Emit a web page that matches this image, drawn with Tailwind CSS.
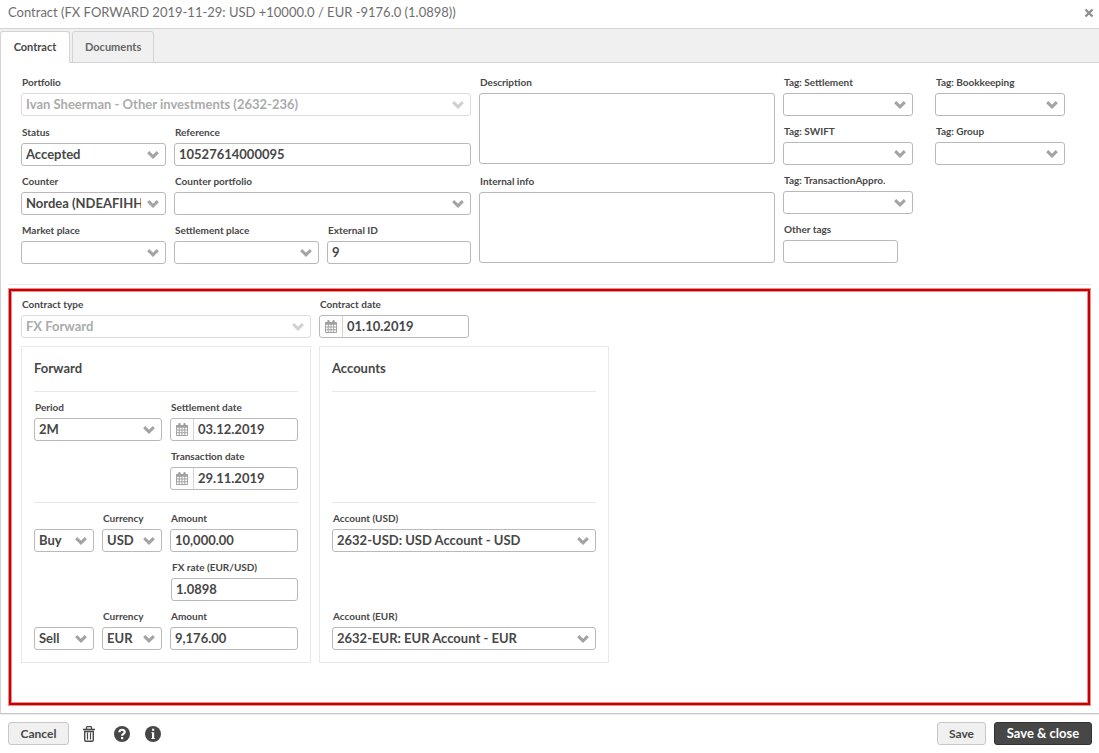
<!DOCTYPE html>
<html lang="en">
<head>
<meta charset="utf-8">
<title>Contract</title>
<script src="https://cdn.jsdelivr.net/npm/@tailwindcss/browser@4"></script>
</head>
<body class="flex min-h-screen flex-col bg-white font-['Lato',sans-serif] text-[13px] font-bold text-[#474747]">
<svg class="hidden" aria-hidden="true">
  <symbol id="chev" viewBox="0 0 12 8"><path d="M1.2 1.2 6 5.8 10.8 1.2" fill="none" stroke="currentColor" stroke-width="3"/></symbol>
  <symbol id="cal" viewBox="0 0 13 14"><path fill="currentColor" fill-rule="evenodd" d="M1 2h1.500V1c0-1.300 2.500-1.300 2.500 0v1h3V1c0-1.300 2.500-1.300 2.500 0v1H12q1 0 1 1v10q0 1-1 1H1q-1 0-1-1V3q0-1 1-1zM1 5v2h2V5zM4 5v2h2V5zM7 5v2h2V5zM10 5v2h2V5zM1 8v2h2V8zM4 8v2h2V8zM7 8v2h2V8zM10 8v2h2V8zM1 11v2h2v-2zM4 11v2h2v-2zM7 11v2h2v-2zM10 11v2h2v-2z"/></symbol>
</svg>

<header class="flex h-[29px] items-center justify-between border-b border-[#d4d4d4] pl-2 pr-1 pb-0.5">
  <h1 class="text-[13px] font-normal text-[#6e6e6e]">Contract (FX FORWARD 2019-11-29: USD +10000.0 / EUR -9176.0 (1.0898))</h1>
  <button type="button" aria-label="Close" class="p-px text-[#8f8f8f]"><svg class="h-2.5 w-2.5" viewBox="0 0 10 10"><path d="M1.500 1.500l7 7M8.500 1.500l-7 7" stroke="currentColor" stroke-width="2.400"/></svg></button>
</header>

<nav role="tablist" class="flex h-[34px] gap-0.5 bg-[#f0f0f0] pt-0.5 text-[11px] shadow-[inset_0_-1px_0_#d4d4d4]">
  <button type="button" role="tab" aria-selected="true" class="min-w-[70px] rounded-t-[3px] border border-b-0 border-[#d4d4d4] bg-white px-3">Contract</button>
  <button type="button" role="tab" aria-selected="false" class="rounded-t-[3px] border border-[#d4d4d4] px-3 text-[#666]">Documents</button>
</nav>

<main class="flex grow flex-col border-l border-[#d4d4d4]">
  <div class="mx-2 flex items-start gap-2 border-b border-[#e8e8e8] pt-[13px] pr-[26px] pb-[20px] pl-3">
    <div class="flex-[450] min-w-0">
      <div>
        <label for="portfolio" class="block h-[17px] px-px text-[10px] leading-3">Portfolio</label>
        <div class="relative text-[#ababab]"><select id="portfolio" disabled class="block h-[23px] w-full appearance-none rounded-[3px] border border-[#dcdcdc] bg-white pl-1 pr-6"><option>Ivan Sheerman - Other investments (2632-236)</option></select><svg class="pointer-events-none absolute top-2 right-[7px] h-2 w-3 text-[#d0d0d0]"><use href="#chev"/></svg></div>
      </div>
      <div class="mt-2.5 grid grid-cols-[145fr_145fr_144fr] gap-x-2 gap-y-[9px]">
        <div>
          <label for="status" class="block h-[17px] px-px text-[10px] leading-3">Status</label>
          <div class="relative"><select id="status" class="block h-[23px] w-full appearance-none rounded-[3px] border border-[#b9b9b9] bg-white pl-1 pr-6"><option>Accepted</option></select><svg class="pointer-events-none absolute top-2 right-[7px] h-2 w-3 text-[#a3a3a3]"><use href="#chev"/></svg></div>
        </div>
        <div class="col-span-2">
          <label for="ref" class="block h-[17px] px-px text-[10px] leading-3">Reference</label>
          <input id="ref" value="10527614000095" class="block h-[23px] w-full rounded-[3px] border border-[#b9b9b9] px-1 pb-0.5">
        </div>
        <div>
          <label for="counter" class="block h-[17px] px-px text-[10px] leading-3">Counter</label>
          <div class="relative"><select id="counter" class="block h-[23px] w-full appearance-none rounded-[3px] border border-[#b9b9b9] bg-white pl-1 pr-6"><option>Nordea (NDEAFIHH)</option></select><svg class="pointer-events-none absolute top-2 right-[7px] h-2 w-3 text-[#a3a3a3]"><use href="#chev"/></svg></div>
        </div>
        <div class="col-span-2">
          <label for="cportfolio" class="block h-[17px] px-px text-[10px] leading-3">Counter portfolio</label>
          <div class="relative"><select id="cportfolio" class="block h-[23px] w-full appearance-none rounded-[3px] border border-[#b9b9b9] bg-white pl-1 pr-6"><option></option></select><svg class="pointer-events-none absolute top-2 right-[7px] h-2 w-3 text-[#a3a3a3]"><use href="#chev"/></svg></div>
        </div>
        <div>
          <label for="market" class="block h-[17px] px-px text-[10px] leading-3">Market place</label>
          <div class="relative"><select id="market" class="block h-[23px] w-full appearance-none rounded-[3px] border border-[#b9b9b9] bg-white pl-1 pr-6"><option></option></select><svg class="pointer-events-none absolute top-2 right-[7px] h-2 w-3 text-[#a3a3a3]"><use href="#chev"/></svg></div>
        </div>
        <div>
          <label for="splace" class="block h-[17px] px-px text-[10px] leading-3">Settlement place</label>
          <div class="relative"><select id="splace" class="block h-[23px] w-full appearance-none rounded-[3px] border border-[#b9b9b9] bg-white pl-1 pr-6"><option></option></select><svg class="pointer-events-none absolute top-2 right-[7px] h-2 w-3 text-[#a3a3a3]"><use href="#chev"/></svg></div>
        </div>
        <div>
          <label for="extid" class="block h-[17px] px-px text-[10px] leading-3">External ID</label>
          <input id="extid" value="9" class="block h-[23px] w-full rounded-[3px] border border-[#b9b9b9] px-1 pb-0.5">
        </div>
      </div>
    </div>

    <div class="flex min-w-0 flex-[296] flex-col gap-[11px]">
      <div>
        <label for="desc" class="block h-[17px] px-px text-[10px] leading-3">Description</label>
        <textarea id="desc" class="block h-[71px] w-full resize-none rounded-[3px] border border-[#b9b9b9] px-1"></textarea>
      </div>
      <div>
        <label for="info" class="block h-[17px] px-px text-[10px] leading-3">Internal info</label>
        <textarea id="info" class="block h-[71px] w-full resize-none rounded-[3px] border border-[#b9b9b9] px-1"></textarea>
      </div>
    </div>

    <div class="grid min-w-0 flex-[282] grid-cols-2 gap-x-[22px] gap-y-[9px]">
      <div>
        <label for="tset" class="block h-[17px] px-px text-[10px] leading-3">Tag: Settlement</label>
        <div class="relative"><select id="tset" class="block h-[23px] w-full appearance-none rounded-[3px] border border-[#b9b9b9] bg-white pl-1 pr-6"><option></option></select><svg class="pointer-events-none absolute top-2 right-[7px] h-2 w-3 text-[#a3a3a3]"><use href="#chev"/></svg></div>
      </div>
      <div>
        <label for="tbook" class="block h-[17px] px-px text-[10px] leading-3">Tag: Bookkeeping</label>
        <div class="relative"><select id="tbook" class="block h-[23px] w-full appearance-none rounded-[3px] border border-[#b9b9b9] bg-white pl-1 pr-6"><option></option></select><svg class="pointer-events-none absolute top-2 right-[7px] h-2 w-3 text-[#a3a3a3]"><use href="#chev"/></svg></div>
      </div>
      <div>
        <label for="tswift" class="block h-[17px] px-px text-[10px] leading-3">Tag: SWIFT</label>
        <div class="relative"><select id="tswift" class="block h-[23px] w-full appearance-none rounded-[3px] border border-[#b9b9b9] bg-white pl-1 pr-6"><option></option></select><svg class="pointer-events-none absolute top-2 right-[7px] h-2 w-3 text-[#a3a3a3]"><use href="#chev"/></svg></div>
      </div>
      <div>
        <label for="tgroup" class="block h-[17px] px-px text-[10px] leading-3">Tag: Group</label>
        <div class="relative"><select id="tgroup" class="block h-[23px] w-full appearance-none rounded-[3px] border border-[#b9b9b9] bg-white pl-1 pr-6"><option></option></select><svg class="pointer-events-none absolute top-2 right-[7px] h-2 w-3 text-[#a3a3a3]"><use href="#chev"/></svg></div>
      </div>
      <div class="col-start-1">
        <label for="tappr" class="block h-[17px] px-px text-[10px] leading-3">Tag: TransactionAppro.</label>
        <div class="relative"><select id="tappr" class="block h-[23px] w-full appearance-none rounded-[3px] border border-[#b9b9b9] bg-white pl-1 pr-6"><option></option></select><svg class="pointer-events-none absolute top-2 right-[7px] h-2 w-3 text-[#a3a3a3]"><use href="#chev"/></svg></div>
      </div>
      <div class="col-start-1 pr-[15px]">
        <label for="other" class="block h-[17px] px-px text-[10px] leading-3">Other tags</label>
        <input id="other" class="block h-[23px] w-full rounded-[3px] border border-[#b9b9b9] px-1 pb-0.5">
      </div>
    </div>
  </div>

  <section class="mt-1 mr-[9px] mb-2 ml-2 grow border-2 border-[#c80000] pt-[7px] pl-2.5 pb-6 shadow-[0_0_0_1px_#e89090,inset_0_0_0_1px_#e89090]">
    <div class="flex gap-2">
      <div class="w-[290px]">
        <label for="ctype" class="block h-[17px] px-px text-[10px] leading-3">Contract type</label>
        <div class="relative text-[#ababab]"><select id="ctype" disabled class="block h-[23px] w-full appearance-none rounded-[3px] border border-[#dcdcdc] bg-white pl-1 pr-6"><option>FX Forward</option></select><svg class="pointer-events-none absolute top-2 right-[7px] h-2 w-3 text-[#d0d0d0]"><use href="#chev"/></svg></div>
      </div>
      <div class="w-[150px]">
        <label for="cdate" class="block h-[17px] px-px text-[10px] leading-3">Contract date</label>
        <div class="flex h-[23px] rounded-[3px] border border-[#b9b9b9]"><button type="button" aria-label="Pick contract date" class="flex w-[23px] items-center justify-center border-r border-[#d4d4d4] text-[#a0a0a0]"><svg class="h-[13px] w-3"  viewBox="0 0 13 14"><use href="#cal" width="13" height="14"/></svg></button><input id="cdate" value="01.10.2019" class="w-0 grow px-1"></div>
      </div>
    </div>

    <div class="mt-2 flex gap-2">
      <div class="w-[290px] border border-[#e8e8e8] p-3">
        <h2 class="h-8 text-[13px] leading-[18px]">Forward</h2>
        <div class="grid grid-cols-2 gap-x-2 gap-y-[9px] border-t border-[#e8e8e8] pt-[9px] pb-3">
          <div>
            <label for="period" class="block h-[17px] px-px text-[10px] leading-3">Period</label>
            <div class="relative"><select id="period" class="block h-[23px] w-full appearance-none rounded-[3px] border border-[#b9b9b9] bg-white pl-1 pr-6"><option>2M</option></select><svg class="pointer-events-none absolute top-2 right-[7px] h-2 w-3 text-[#a3a3a3]"><use href="#chev"/></svg></div>
          </div>
          <div>
            <label for="sdate" class="block h-[17px] px-px text-[10px] leading-3">Settlement date</label>
            <div class="flex h-[23px] rounded-[3px] border border-[#b9b9b9]"><button type="button" aria-label="Pick settlement date" class="flex w-[23px] items-center justify-center border-r border-[#d4d4d4] text-[#a0a0a0]"><svg class="h-[13px] w-3"  viewBox="0 0 13 14"><use href="#cal" width="13" height="14"/></svg></button><input id="sdate" value="03.12.2019" class="w-0 grow px-1"></div>
          </div>
          <div class="col-start-2">
            <label for="tdate" class="block h-[17px] px-px text-[10px] leading-3">Transaction date</label>
            <div class="flex h-[23px] rounded-[3px] border border-[#b9b9b9]"><button type="button" aria-label="Pick transaction date" class="flex w-[23px] items-center justify-center border-r border-[#d4d4d4] text-[#a0a0a0]"><svg class="h-[13px] w-3"  viewBox="0 0 13 14"><use href="#cal" width="13" height="14"/></svg></button><input id="tdate" value="29.11.2019" class="w-0 grow px-1"></div>
          </div>
        </div>
        <div class="grid grid-cols-4 items-end gap-x-2 gap-y-[9px] border-t border-[#e8e8e8] pt-[9px]">
          <div class="relative"><select aria-label="Buy side" class="block h-[23px] w-full appearance-none rounded-[3px] border border-[#b9b9b9] bg-white pl-1 pr-5"><option>Buy</option></select><svg class="pointer-events-none absolute top-2 right-[7px] h-2 w-3 text-[#a3a3a3]"><use href="#chev"/></svg></div>
          <div>
            <label for="cur1" class="block h-[17px] px-px text-[10px] leading-3">Currency</label>
            <div class="relative"><select id="cur1" class="block h-[23px] w-full appearance-none rounded-[3px] border border-[#b9b9b9] bg-white pl-1 pr-5"><option>USD</option></select><svg class="pointer-events-none absolute top-2 right-[7px] h-2 w-3 text-[#a3a3a3]"><use href="#chev"/></svg></div>
          </div>
          <div class="col-span-2">
            <label for="am1" class="block h-[17px] px-px text-[10px] leading-3">Amount</label>
            <input id="am1" value="10,000.00" class="block h-[23px] w-full rounded-[3px] border border-[#b9b9b9] px-1 pb-0.5">
          </div>
          <div class="col-span-2 col-start-3 pl-px">
            <label for="rate" class="block h-[17px] px-px text-[10px] leading-3">FX rate (EUR/USD)</label>
            <input id="rate" value="1.0898" class="block h-[23px] w-full rounded-[3px] border border-[#b9b9b9] px-1 pb-0.5">
          </div>
          <div class="relative"><select aria-label="Sell side" class="block h-[23px] w-full appearance-none rounded-[3px] border border-[#b9b9b9] bg-white pl-1 pr-5"><option>Sell</option></select><svg class="pointer-events-none absolute top-2 right-[7px] h-2 w-3 text-[#a3a3a3]"><use href="#chev"/></svg></div>
          <div>
            <label for="cur2" class="block h-[17px] px-px text-[10px] leading-3">Currency</label>
            <div class="relative"><select id="cur2" class="block h-[23px] w-full appearance-none rounded-[3px] border border-[#b9b9b9] bg-white pl-1 pr-5"><option>EUR</option></select><svg class="pointer-events-none absolute top-2 right-[7px] h-2 w-3 text-[#a3a3a3]"><use href="#chev"/></svg></div>
          </div>
          <div class="col-span-2">
            <label for="am2" class="block h-[17px] px-px text-[10px] leading-3">Amount</label>
            <input id="am2" value="9,176.00" class="block h-[23px] w-full rounded-[3px] border border-[#b9b9b9] px-1 pb-0.5">
          </div>
        </div>
      </div>

      <div class="flex w-[290px] flex-col border border-[#e8e8e8] p-3">
        <h2 class="h-8 text-[13px] leading-[18px]">Accounts</h2>
        <div class="grow border-t border-[#e8e8e8]"></div>
        <div class="flex flex-col gap-[58px] border-t border-[#e8e8e8] pt-[9px]">
          <div>
            <label for="acc1" class="block h-[17px] px-px text-[10px] leading-3">Account (USD)</label>
            <div class="relative"><select id="acc1" class="block h-[23px] w-full appearance-none rounded-[3px] border border-[#b9b9b9] bg-white pl-1 pr-6"><option>2632-USD: USD Account - USD</option></select><svg class="pointer-events-none absolute top-2 right-[7px] h-2 w-3 text-[#a3a3a3]"><use href="#chev"/></svg></div>
          </div>
          <div>
            <label for="acc2" class="block h-[17px] px-px text-[10px] leading-3">Account (EUR)</label>
            <div class="relative"><select id="acc2" class="block h-[23px] w-full appearance-none rounded-[3px] border border-[#b9b9b9] bg-white pl-1 pr-6"><option>2632-EUR: EUR Account - EUR</option></select><svg class="pointer-events-none absolute top-2 right-[7px] h-2 w-3 text-[#a3a3a3]"><use href="#chev"/></svg></div>
          </div>
        </div>
      </div>
    </div>
  </section>
</main>

<footer class="flex h-10 items-center border-t border-[#c8c8c8] pr-[7px] pl-2 text-[12px] shadow-[inset_0_1px_0_#ececec]">
  <button type="button" class="h-[23px] min-w-[61px] rounded-[3px] border border-[#c8c8c8] bg-[#f0f0f0] px-[11px]">Cancel</button>
  <button type="button" aria-label="Delete" class="ml-3.5"><svg class="h-4 w-3" viewBox="0 0 12 16" fill="none" stroke="currentColor"><path d="M3.500 3V1.500Q3.500.7 4.300.7h3.400q.8 0 .8.800V3" stroke-width="1.200"/><path d="M0 3.500h12" stroke-width="1.600"/><path d="M1.700 5.500V14q0 1.300 1.300 1.300h6q1.300 0 1.300-1.300V5.500z" stroke-width="1.400"/><path d="M4.500 6.500v7M7.500 6.500v7" stroke-width="1.200"/></svg></button>
  <button type="button" aria-label="Help" class="ml-[19px]"><svg class="h-4 w-4" viewBox="0 0 16 16"><circle cx="8" cy="8" r="8" fill="currentColor"/><path d="M5.400 6.200C5.400 2.900 10.700 3 10.700 6c0 1.900-2.600 1.800-2.600 3.800" fill="none" stroke="#fff" stroke-width="2.200"/><path d="M7 11h2.200v2.200H7z" fill="#fff"/></svg></button>
  <button type="button" aria-label="Information" class="ml-[15px]"><svg class="h-4 w-4" viewBox="0 0 16 16"><circle cx="8" cy="8" r="8" fill="currentColor"/><path d="M7 2.800h2.200v2H7zM6.400 6.200h2.800v5.800h.6v1H6.400v-1H7V7.200h-.6z" fill="#fff"/></svg></button>
  <button type="button" class="ml-auto h-[23px] rounded-[3px] border border-[#c8c8c8] bg-[#f0f0f0] px-[11px]">Save</button>
  <button type="button" class="ml-2 h-[23px] min-w-[98px] rounded-[3px] border border-[#333] bg-[#474747] px-2.5 text-[13px] text-white">Save &amp; close</button>
</footer>
</body>
</html>
